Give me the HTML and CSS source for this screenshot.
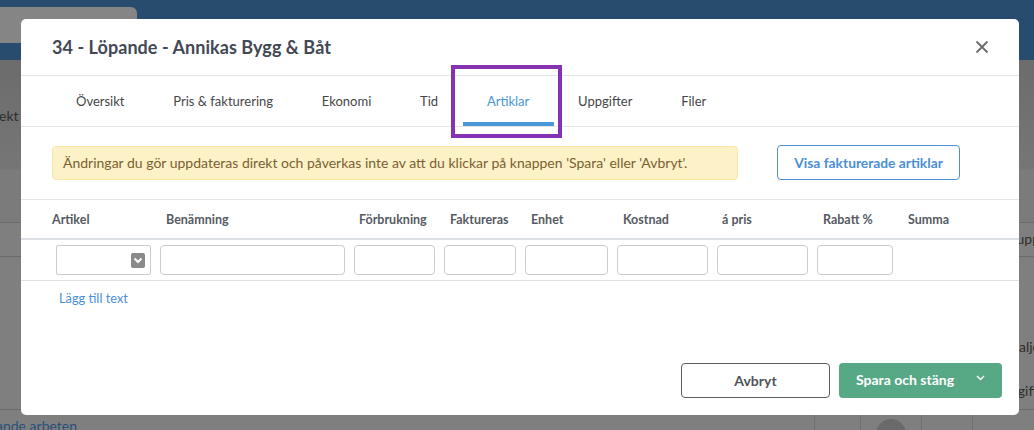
FILE: index.html
```html
<!DOCTYPE html>
<html lang="sv">
<head>
<meta charset="utf-8">
<title>Artiklar</title>
<link rel="stylesheet" href="styles.css">
</head>
<body>
<div class="page">
  <div class="topbar"><div class="browser-tab"></div></div>
  <div class="subbar"><span class="bg-text left">ekt</span></div>
  <div class="band"></div>
  <div class="bg-row r1"><span class="bg-text right">upp</span></div>
  <div class="bg-row r2">
    <span class="bg-text right t-alje">alje</span>
    <span class="bg-text right t-gift">gift</span>
  </div>
  <div class="bg-bottom">
    <span class="bg-link">ande arbeten</span>
    <div class="bg-cells">
      <span class="cell c1"></span><span class="cell c2"><i class="dot"></i></span><span class="cell c3"></span><span class="cell c4"></span>
    </div>
  </div>
</div>

<div class="modal">
  <div class="modal-header">
    <h1 class="modal-title">34 - Löpande - Annikas Bygg &amp; Båt</h1>
    <button class="close" aria-label="Stäng">
      <svg width="14" height="14" viewBox="0 0 14 14"><path d="M1.5 1.5 L12.5 12.5 M12.5 1.5 L1.5 12.5" stroke="#6b6b6b" stroke-width="1.8" fill="none"/></svg>
    </button>
  </div>

  <nav class="tabs">
    <a class="tab">Översikt</a>
    <a class="tab">Pris &amp; fakturering</a>
    <a class="tab">Ekonomi</a>
    <a class="tab">Tid</a>
    <a class="tab active">Artiklar<span class="highlight"></span></a>
    <a class="tab">Uppgifter</a>
    <a class="tab">Filer</a>
  </nav>

  <div class="notice-row">
    <div class="alert">Ändringar du gör uppdateras direkt och påverkas inte av att du klickar på knappen 'Spara' eller 'Avbryt'.</div>
    <button class="btn-outline">Visa fakturerade artiklar</button>
  </div>

  <div class="grid head">
    <div class="th first">Artikel</div>
    <div class="th">Benämning</div>
    <div class="th n1">Förbrukning</div>
    <div class="th">Faktureras</div>
    <div class="th">Enhet</div>
    <div class="th">Kostnad</div>
    <div class="th n1">á pris</div>
    <div class="th">Rabatt %</div>
    <div class="th sum">Summa</div>
  </div>

  <div class="grid inputs">
    <div class="td"><div class="select"><span class="arrow"><svg width="10" height="7" viewBox="0 0 10 7"><path d="M1.5 1.5 L5 5 L8.5 1.5" stroke="#fff" stroke-width="2" fill="none"/></svg></span></div></div>
    <div class="td"><div class="input"></div></div>
    <div class="td"><div class="input"></div></div>
    <div class="td"><div class="input"></div></div>
    <div class="td"><div class="input"></div></div>
    <div class="td"><div class="input"></div></div>
    <div class="td"><div class="input"></div></div>
    <div class="td"><div class="input rabatt"></div></div>
    <div class="td"></div>
  </div>

  <div class="add-row"><a class="add-link">Lägg till text</a></div>

  <div class="modal-footer">
    <button class="btn-cancel">Avbryt</button>
    <button class="btn-save"><span>Spara och stäng</span><svg width="9" height="6" viewBox="0 0 9 6"><path d="M1 1 L4.5 4.5 L8 1" stroke="#fff" stroke-width="1.4" fill="none"/></svg></button>
  </div>
</div>
</body>
</html>
```

FILE: styles.css
```css
* { box-sizing: border-box; }
html, body { margin: 0; padding: 0; }
body {
  width: 1034px;
  height: 430px;
  overflow: hidden;
  background: #7f7f7f;
  font-family: Lato, "Liberation Sans", sans-serif;
  position: relative;
}

/* ---------- dimmed background page ---------- */
.page { display: flex; flex-direction: column; }
.topbar {
  height: 60px;
  background: #274c6e;
  padding-top: 7px;
}
.browser-tab {
  width: 137px;
  height: 36px;
  background: #858585;
  border-radius: 0 6px 0 0;
}
.subbar {
  height: 110px;
  background: linear-gradient(#6c6c6c, #767676);
  position: relative;
}
.band { height: 53px; background: #7b7b7b; border-bottom: 1px solid #6b6b6b; }
.bg-row { border-bottom: 1px solid #6b6b6b; position: relative; }
.bg-row.r1 { height: 34px; }
.bg-row.r2 { height: 153px; }
.bg-text {
  position: absolute;
  font-size: 14px;
  color: #2e2e2e;
}
.bg-text.left { left: -1px; top: 47px; }
.bg-row.r1 .bg-text { right: -6px; top: 7px; }
.t-alje { right: -6px; top: 81px; }
.t-gift { right: -4px; top: 125px; }
.bg-bottom {
  height: 20px;
  display: flex;
  justify-content: space-between;
}
.bg-link { font-size: 14px; color: #29517a; margin-left: -4px; margin-top: 7px; }
.bg-cells { display: flex; margin-right: 61px; }
.cell { border-left: 1px solid #717171; height: 20px; position: relative; }
.c1 { width: 46px; }
.c2 { width: 61px; }
.c3 { width: 51px; }
.c4 { width: 0; }
.dot {
  position: absolute;
  left: 15px; top: 9px;
  width: 30px; height: 30px;
  border-radius: 50%;
  background: #6a6a6a;
}

/* ---------- modal ---------- */
.modal {
  position: absolute;
  left: 21px;
  top: 19px;
  width: 998px;
  height: 396px;
  background: #fff;
  border-radius: 5px;
  display: flex;
  flex-direction: column;
  color: #444;
}
.modal-header {
  height: 57px;
  border-bottom: 1px solid #e6e6e6;
  display: flex;
  align-items: center;
  justify-content: space-between;
  padding: 0 29px 0 31px;
}
.modal-title {
  margin: 0;
  font-size: 18px;
  font-weight: 700;
  color: #434954;
  letter-spacing: 0.05px;
}
.close {
  border: 0; background: none; padding: 0;
  width: 16px; height: 16px;
  display: flex; align-items: center; justify-content: center;
}

.tabs {
  display: flex;
  height: 51px;
  padding-left: 30px;
  border-bottom: 1px solid #e6e6e6;
}
.tab {
  position: relative;
  padding: 0 24.4px;
  height: 50px;
  display: flex;
  align-items: center;
  font-size: 13px;
  color: #474747;
  border-bottom: 4px solid transparent;
  padding-top: 3px;
}
.tab:first-child { padding-left: 25px; }
.tab.active { color: #4a94d6; border-bottom-color: #4a98d8; }
.highlight {
  position: absolute;
  left: -12px;
  top: -11px;
  width: 111px;
  height: 73px;
  border: 4px solid #8533b3;
}

.notice-row {
  height: 73px;
  border-bottom: 1px solid #e6e6e6;
  display: flex;
  align-items: center;
  padding-left: 31px;
  padding-bottom: 1px;
}
.alert {
  width: 686px;
  height: 34px;
  background: #fdf1c8;
  border: 1px solid #f8e6a7;
  border-radius: 4px;
  color: #7b6131;
  font-size: 14px;
  display: flex;
  align-items: center;
  padding-left: 10px;
}
.btn-outline {
  margin-left: 39px;
  width: 183px;
  height: 35px;
  border: 1px solid #4a90d9;
  border-radius: 4px;
  background: #fff;
  color: #4a8fd6;
  font-family: inherit;
  font-size: 13.8px;
  font-weight: 700;
}

.grid {
  display: grid;
  grid-template-columns: 104px 194px 90px 81px 92px 100px 100px 91px 1fr;
  padding-left: 31px;
}
.grid.head {
  height: 40px;
  border-bottom: 2px solid #dde1e5;
  align-items: center;
}
.th {
  font-size: 12.5px;
  font-weight: 700;
  color: #565b63;
  padding-left: 10px;
}
.th.first { padding-left: 0; }
.th.n1 { padding-left: 9px; }
.th.sum { padding-left: 4px; }

.grid.inputs {
  height: 41px;
  border-bottom: 1px solid #dde1e5;
  align-items: center;
}
.td { padding-left: 4px; }
.input {
  width: calc(100% - 5px);
  height: 30px;
  border: 1px solid #c9cdd3;
  border-radius: 4px;
}
.input.rabatt { width: 76px; }
.select {
  width: 95px;
  height: 30px;
  border: 1px solid #c9cdd3;
  border-radius: 2px;
  display: flex;
  align-items: center;
  justify-content: flex-end;
  padding-right: 5px;
}
.arrow {
  width: 14px; height: 15px;
  background: #8a8a8a;
  border-radius: 2px;
  display: flex; align-items: center; justify-content: center;
}

.add-row { padding: 6px 0 0 38px; }
.add-link { font-size: 12.8px; color: #4a90d9; }

.modal-footer {
  margin-top: auto;
  display: flex;
  justify-content: flex-end;
  gap: 9px;
  padding: 0 17px 17px 0;
}
.btn-cancel {
  width: 149px; height: 35px;
  border: 1px solid #5a5d62;
  border-radius: 4px;
  background: #fff;
  font-family: inherit;
  font-size: 14px;
  font-weight: 700;
  color: #50545b;
}
.btn-save {
  width: 163px; height: 35px;
  border: 0;
  border-radius: 4px;
  background: #57a884;
  color: #fff;
  font-family: inherit;
  font-size: 14px;
  font-weight: 700;
  display: flex;
  align-items: center;
  justify-content: space-between;
  padding: 0 17px 2px 17px;
}
.btn-save svg { margin-top: -4px; }
```
